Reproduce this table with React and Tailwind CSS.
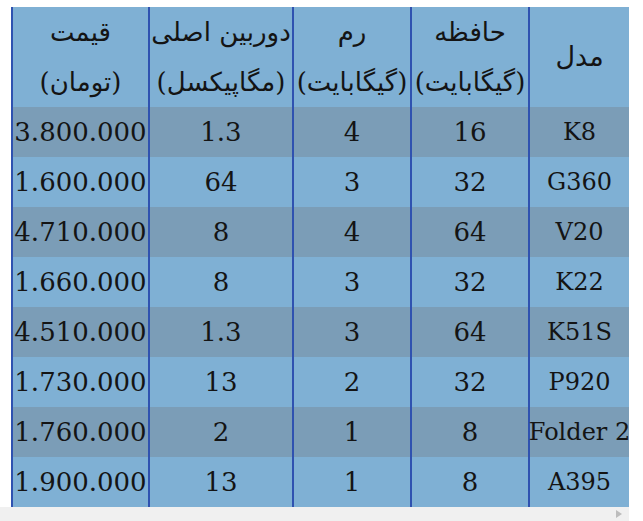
const rows = [
  ['K8', '16', '4', '1.3', '3.800.000'],
  ['G360', '32', '3', '64', '1.600.000'],
  ['V20', '64', '4', '8', '4.710.000'],
  ['K22', '32', '3', '8', '1.660.000'],
  ['K51S', '64', '3', '1.3', '4.510.000'],
  ['P920', '32', '2', '13', '1.730.000'],
  ['Folder 2', '8', '1', '2', '1.760.000'],
  ['A395', '8', '1', '13', '1.900.000'],
];

const cell = 'border-l-2 border-[#2f52b0] flex items-center justify-center whitespace-nowrap';

export default function App() {
  return (
    <div
      className="w-[643px] h-[521px] bg-white overflow-hidden text-[#141414]"
      style={{ fontFamily: '"DejaVu Serif", "DejaVu Sans", serif' }}
    >
      <div className="pt-[7px] pl-[11px]">
        <div dir="rtl" className="w-[618px] grid grid-cols-[101px_118px_118px_144px_137px]">
          {/* header */}
          <div className={`${cell} h-[100px] bg-[#7fb0d4] text-[27px]`}>مدل</div>
          <div className={`${cell} h-[100px] bg-[#7fb0d4] flex-col text-[26px] leading-[50px]`}>
            <span>حافظه</span>
            <span>(گیگابایت)</span>
          </div>
          <div className={`${cell} h-[100px] bg-[#7fb0d4] flex-col text-[26px] leading-[50px]`}>
            <span>رم</span>
            <span>(گیگابایت)</span>
          </div>
          <div className={`${cell} h-[100px] bg-[#7fb0d4] flex-col text-[26px] leading-[50px]`}>
            <span>دوربین اصلی</span>
            <span>(مگاپیکسل)</span>
          </div>
          <div className={`${cell} h-[100px] bg-[#7fb0d4] flex-col text-[26px] leading-[50px]`}>
            <span>قیمت</span>
            <span>(تومان)</span>
          </div>
          {rows.map((r, i) =>
            r.map((v, j) => (
              <div
                key={`${i}-${j}`}
                dir="ltr"
                className={`${cell} h-[50px] ${j === 0 ? 'text-[24px]' : 'text-[26px]'} ${i % 2 === 0 ? 'bg-[#7b9db7]' : 'bg-[#7fb0d4]'}`}
              >
                {v}
              </div>
            ))
          )}
        </div>
      </div>
      <div className="w-[629px] h-[14px] bg-[#f0f0f0] flex items-center justify-end pr-[7px]">
        <svg width="6" height="8" viewBox="0 0 6 8">
          <path d="M0 0 L6 4 L0 8 Z" fill="#bdbdbd" />
        </svg>
      </div>
    </div>
  );
}
